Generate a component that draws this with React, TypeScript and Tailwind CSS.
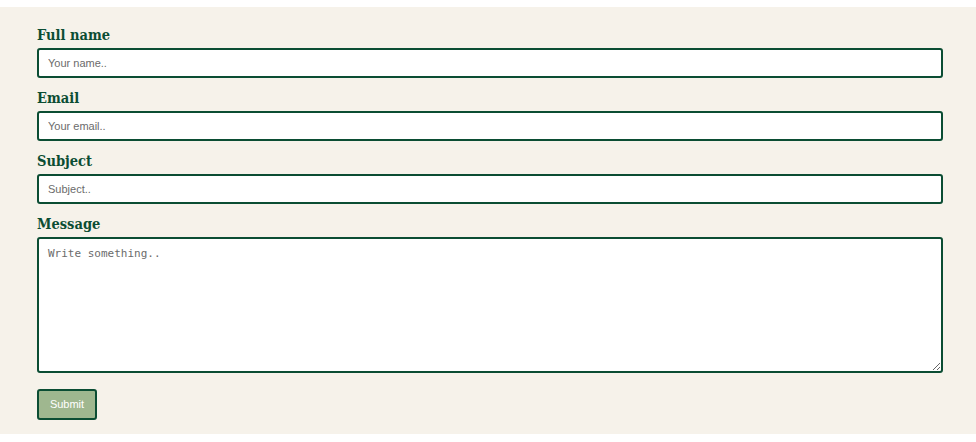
import React, { useState } from 'react';

const labelCls =
  "block h-5 leading-5 text-[14.5px] font-bold text-[#0b4d33] font-['DejaVu_Serif_Condensed','DejaVu_Serif',serif]";
const inputCls =
  "block w-full h-[30px] px-[9px] bg-white border-2 border-[#0b4d33] rounded-[3px] text-[11px] text-gray-800 font-['Liberation_Sans',Arial,sans-serif] placeholder:text-[#6b6b6b] outline-none";

const App: React.FC = () => {
  const [form, setForm] = useState({ name: '', email: '', subject: '', message: '' });

  const update = (key: keyof typeof form) => (e: React.ChangeEvent<HTMLInputElement | HTMLTextAreaElement>) =>
    setForm({ ...form, [key]: e.target.value });

  return (
    <div className="min-h-screen bg-white pt-[7px]">
      <form
        className="bg-[#f6f2ea] pl-[37px] pr-[33px] pt-[18px] pb-[14px] flex flex-col"
        onSubmit={(e) => e.preventDefault()}
      >
        {/* Full name */}
        <label className={labelCls}>Full name</label>
        <input
          type="text"
          value={form.name}
          onChange={update('name')}
          placeholder="Your name.."
          className={`${inputCls} mt-[3px]`}
        />

        {/* Email */}
        <label className={`${labelCls} mt-[10px]`}>Email</label>
        <input
          type="email"
          value={form.email}
          onChange={update('email')}
          placeholder="Your email.."
          className={`${inputCls} mt-[3px]`}
        />

        {/* Subject */}
        <label className={`${labelCls} mt-[10px]`}>Subject</label>
        <input
          type="text"
          value={form.subject}
          onChange={update('subject')}
          placeholder="Subject.."
          className={`${inputCls} mt-[3px]`}
        />

        {/* Message */}
        <label className={`${labelCls} mt-[10px]`}>Message</label>
        <textarea
          value={form.message}
          onChange={update('message')}
          placeholder="Write something.."
          className="block w-full h-[136px] mt-[3px] px-[9px] py-[8px] bg-white border-2 border-[#0b4d33] rounded-[3px] text-[11px] leading-[14px] text-gray-800 font-['DejaVu_Sans_Mono',monospace] placeholder:text-[#6b6b6b] outline-none resize-y"
        />

        <div className="mt-[16px]">
          <button
            type="submit"
            className="w-[60px] h-[31px] bg-[#9fb78f] border-2 border-[#0b4d33] rounded-[3px] text-white text-[11px] font-['Liberation_Sans',Arial,sans-serif]"
          >
            Submit
          </button>
        </div>
      </form>
    </div>
  );
};

export default App;
